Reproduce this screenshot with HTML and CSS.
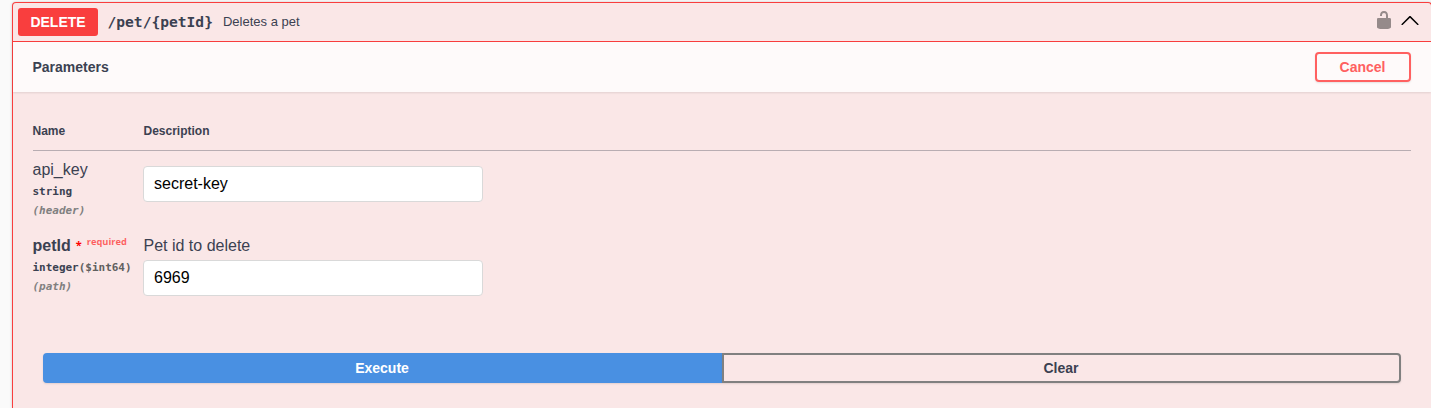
FILE: index.html
```html
<!DOCTYPE html>
<html lang="en">
<head>
<meta charset="utf-8">
<title>DELETE /pet/{petId}</title>
<link rel="stylesheet" href="styles.css">
</head>
<body>
<section class="opblock">
  <header class="summary">
    <span class="method">DELETE</span>
    <span class="path">/pet/{petId}</span>
    <span class="summary-text">Deletes a pet</span>
    <svg class="lock" viewBox="0 0 20 20" width="20" height="20"><path d="M15.8 8H14V5.6C14 2.703 12.665 1 10 1 7.334 1 6 2.703 6 5.6V6h2v-.801C8 3.754 8.797 3 10 3c1.203 0 2 .754 2 2.199V8H4c-.553 0-1 .646-1 1.199V17c0 .549.428 1.139.951 1.307l1.197.387C5.672 18.861 6.55 19 7.1 19h5.8c.549 0 1.428-.139 1.951-.307l1.196-.387c.524-.167.953-.757.953-1.306V9.199C17 8.646 16.352 8 15.8 8z"/></svg>
    <svg class="arrow" viewBox="0 0 20 20" width="20" height="20"><path d="M17.418 14.908c.272.268.709.268.979 0s.271-.701 0-.969l-7.908-7.83c-.27-.268-.707-.268-.979 0l-7.908 7.83c-.27.268-.27.701 0 .969.271.268.709.268.979 0L10 7.767l7.418 7.141z"/></svg>
  </header>
  <div class="section-header">
    <h4 class="section-title">Parameters</h4>
    <button class="btn cancel">Cancel</button>
  </div>
  <div class="parameters">
    <div class="row head">
      <div>Name</div>
      <div>Description</div>
    </div>
    <div class="row first">
      <div>
        <div class="name">api_key</div>
        <div class="type">string</div>
        <div class="in">(header)</div>
      </div>
      <div class="value">
        <input class="field" type="text" value="secret-key">
      </div>
    </div>
    <div class="row second">
      <div>
        <div class="name required">petId<span class="star">*</span><span class="flag">required</span></div>
        <div class="type">integer<span class="format">($int64)</span></div>
        <div class="in">(path)</div>
      </div>
      <div class="value">
        <p class="note">Pet id to delete</p>
        <input class="field" type="text" value="6969">
      </div>
    </div>
  </div>
  <div class="actions">
    <button class="btn execute">Execute</button>
    <button class="btn clear">Clear</button>
  </div>
</section>
</body>
</html>
```
FILE: styles.css
```css
* { box-sizing: border-box; }

body {
  margin: 0;
  padding: 2px 0 0 12px;
  height: 408px;
  overflow: hidden;
  background: #fafafa;
  color: #3b4151;
  font-family: "Liberation Sans", Arial, sans-serif;
}

.opblock {
  width: 1420px;
  height: 406px;
  border: 1px solid #f93e3e;
  border-bottom: 0;
  border-radius: 4px 4px 0 0;
  background: #fae7e7;
  box-shadow: 0 0 3px rgba(0, 0, 0, .19);
}

.summary {
  display: flex;
  align-items: center;
  height: 39px;
  padding: 0 11px 0 5px;
  border-bottom: 1px solid #f93e3e;
}

.method {
  width: 80px;
  height: 28px;
  border-radius: 3px;
  background: #f93e3e;
  color: #fff;
  font-size: 14px;
  font-weight: 700;
  line-height: 28px;
  text-align: center;
}

.path {
  margin-left: 9.5px;
  font: 700 14.6px/20px "DejaVu Sans Mono", monospace;
}

.summary-text {
  margin-left: 10px;
  font-size: 13px;
  line-height: 16px;
}

.lock {
  margin: 0 0 4px auto;
  opacity: .4;
}

.arrow { margin: 0 0 4px 6px; }

.section-header {
  display: flex;
  align-items: center;
  justify-content: space-between;
  height: 50px;
  padding: 0 20px 0 19.4px;
  background: rgba(255, 255, 255, .8);
  box-shadow: 0 1px 2px rgba(0, 0, 0, .1);
}

.section-title {
  margin: 0;
  font-size: 14px;
}

.btn {
  height: 30px;
  padding: 0 1px 0 0;
  border: 2px solid gray;
  border-radius: 4px;
  background: transparent;
  box-shadow: 0 1px 2px rgba(0, 0, 0, .1);
  color: #3b4151;
  font: 700 14px/16px "Liberation Sans", Arial, sans-serif;
}

.cancel {
  width: 96px;
  border-color: #ff6060;
  color: #ff6060;
}

.parameters { padding: 0 20px 0 19.5px; }

.row {
  display: grid;
  grid-template-columns: 110px 1fr;
  column-gap: 1px;
}

.head {
  height: 59px;
  padding-top: 32px;
  border-bottom: 1px solid rgba(59, 65, 81, .35);
  font-size: 12px;
  font-weight: 700;
  line-height: 15px;
}

.row.first {
  height: 76px;
  padding-top: 9px;
}

.row.second {
  height: 126px;
  padding-top: 9px;
}

.first .value { padding-top: 6px; }

.name {
  height: 20px;
  font-size: 16px;
  line-height: 20px;
  white-space: nowrap;
}

.name.required { font-weight: 700; }

.star {
  margin-left: 5px;
  color: #f00;
  font: 700 11px/10px "Open Sans", sans-serif;
  vertical-align: 2px;
}

.flag {
  margin-left: 5px;
  color: rgba(255, 0, 0, .6);
  font: 700 9.3px/10px "Open Sans", sans-serif;
  vertical-align: 6px;
}

.type,
.in {
  font: 700 10.97px/19px "DejaVu Sans Mono", monospace;
  height: 19px;
  margin-top: 2px;
  white-space: nowrap;
}

.in {
  margin-top: 0;
  color: gray;
  font-style: italic;
}

.format { color: #606060; }

.note {
  margin: 0 0 4px;
  font-size: 16px;
  line-height: 20px;
}

.field {
  display: block;
  width: 340px;
  height: 36px;
  margin-left: -.5px;
  padding: 0 10px;
  border: 1px solid #d9d9d9;
  border-radius: 4px;
  background: #fff;
  color: #000;
  font: 16px "Liberation Sans", Arial, sans-serif;
}

.actions {
  display: flex;
  padding: 0 30px;
}

.execute {
  flex: none;
  width: 679px;
  border-color: #4990e2;
  border-radius: 4px 0 0 4px;
  background: #4990e2;
  color: #fff;
}

.clear {
  flex: 1;
  border-radius: 0 4px 4px 0;
}
```
